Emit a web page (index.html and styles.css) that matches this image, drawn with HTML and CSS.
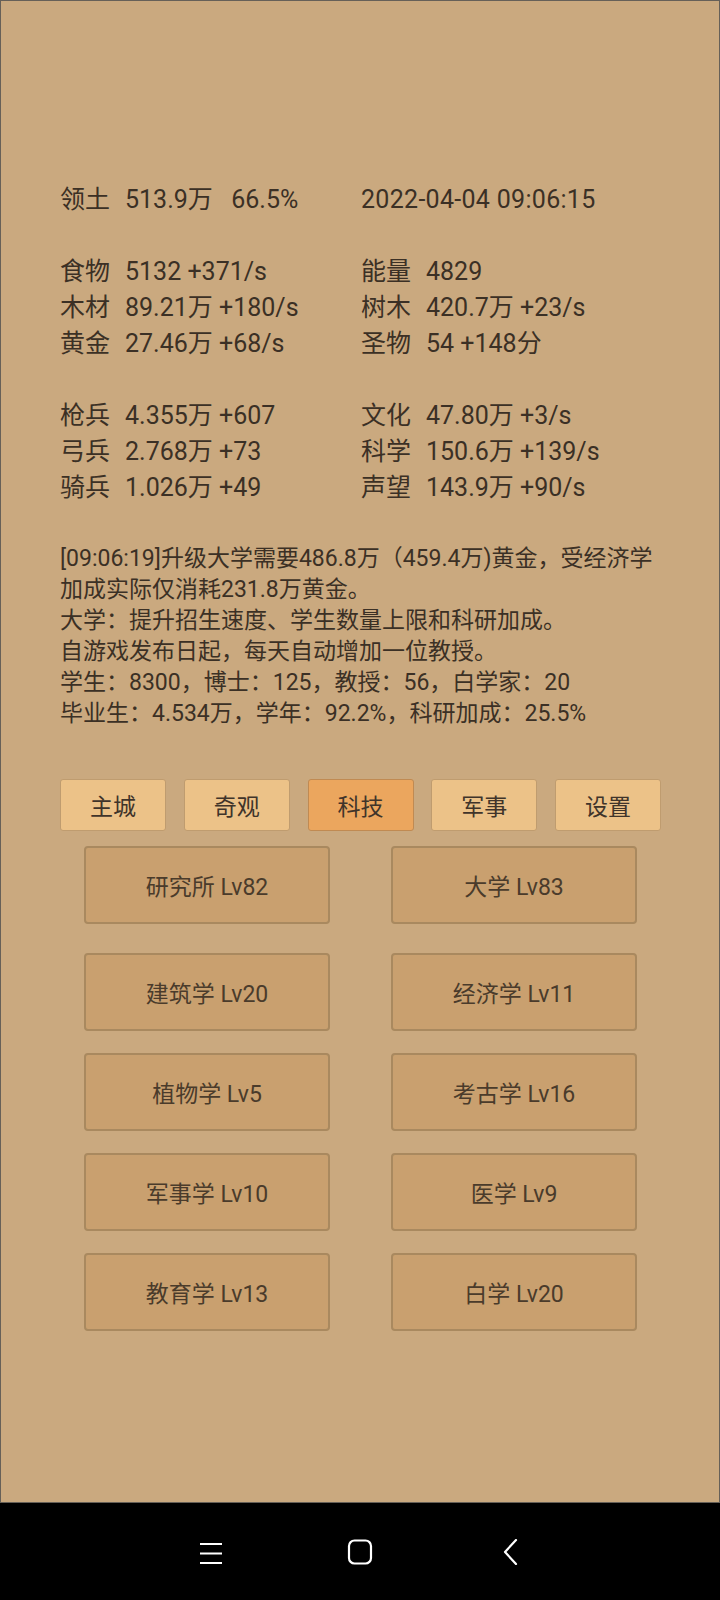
FILE: index.html
```html
<!DOCTYPE html>
<html lang="zh-CN">
<head>
<meta charset="utf-8">
<title>科技</title>
<link rel="stylesheet" href="styles.css">
</head>
<body>
<div class="frame">
  <div class="stats">
    <div class="row">
      <div class="cell"><span class="lbl">领土</span><span class="val">513.9万  <span class="pct">66.5%</span></span></div>
      <div class="cell"><span class="val date">2022-04-04 09:06:15</span></div>
    </div>
    <div class="row blank"></div>
    <div class="row">
      <div class="cell"><span class="lbl">食物</span><span class="val">5132 +371/s</span></div>
      <div class="cell"><span class="lbl">能量</span><span class="val">4829</span></div>
    </div>
    <div class="row">
      <div class="cell"><span class="lbl">木材</span><span class="val">89.21万 +180/s</span></div>
      <div class="cell"><span class="lbl">树木</span><span class="val">420.7万 +23/s</span></div>
    </div>
    <div class="row">
      <div class="cell"><span class="lbl">黄金</span><span class="val">27.46万 +68/s</span></div>
      <div class="cell"><span class="lbl">圣物</span><span class="val">54 +148分</span></div>
    </div>
    <div class="row blank"></div>
    <div class="row">
      <div class="cell"><span class="lbl">枪兵</span><span class="val">4.355万 +607</span></div>
      <div class="cell"><span class="lbl">文化</span><span class="val">47.80万 +3/s</span></div>
    </div>
    <div class="row">
      <div class="cell"><span class="lbl">弓兵</span><span class="val">2.768万 +73</span></div>
      <div class="cell"><span class="lbl">科学</span><span class="val">150.6万 +139/s</span></div>
    </div>
    <div class="row">
      <div class="cell"><span class="lbl">骑兵</span><span class="val">1.026万 +49</span></div>
      <div class="cell"><span class="lbl">声望</span><span class="val">143.9万 +90/s</span></div>
    </div>
  </div>

  <div class="message">
    <p>[09:06:19]升级大学需要486.8万（459.4万)黄金，受经济学加成实际仅消耗231.8万黄金。</p>
    <p>大学：提升招生速度、学生数量上限和科研加成。</p>
    <p>自游戏发布日起，每天自动增加一位教授。</p>
    <p>学生：8300，博士：125，教授：56，白学家：20</p>
    <p>毕业生：4.534万，学年：92.2%，科研加成：25.5%</p>
  </div>

  <div class="tabs">
    <div class="tab">主城</div>
    <div class="tab">奇观</div>
    <div class="tab active">科技</div>
    <div class="tab">军事</div>
    <div class="tab">设置</div>
  </div>

  <div class="grid">
    <div class="btn">研究所 Lv82</div>
    <div class="btn">大学 Lv83</div>
    <div class="btn">建筑学 Lv20</div>
    <div class="btn">经济学 Lv11</div>
    <div class="btn">植物学 Lv5</div>
    <div class="btn">考古学 Lv16</div>
    <div class="btn">军事学 Lv10</div>
    <div class="btn">医学 Lv9</div>
    <div class="btn">教育学 Lv13</div>
    <div class="btn">白学 Lv20</div>
  </div>
</div>

<div class="navbar">
  <svg class="nav-icon menu" width="24" height="24" viewBox="0 0 24 24">
    <path d="M1 3h22M1 12.5h22M1 22h22" stroke="#fff" stroke-width="2.2" fill="none"/>
  </svg>
  <svg class="nav-icon home" width="26" height="26" viewBox="0 0 26 26">
    <rect x="2" y="1.5" width="22" height="23" rx="5.5" ry="5.5" stroke="#fff" stroke-width="2.2" fill="none"/>
  </svg>
  <svg class="nav-icon back" width="16" height="26" viewBox="0 0 16 26">
    <path d="M13 1L2 13l11 12" stroke="#fff" stroke-width="2.2" fill="none" stroke-linecap="round" stroke-linejoin="round"/>
  </svg>
</div>
</body>
</html>
```

FILE: styles.css
```css
* { box-sizing: border-box; }
html, body { margin: 0; padding: 0; }
body {
  width: 720px;
  height: 1600px;
  background: #000;
  font-family: Roboto, "Noto Sans CJK SC", sans-serif;
  color: #3b3025;
  overflow: hidden;
}
.frame {
  height: 1503px;
  background: #caa97f;
  border: 1px solid #666058;
  padding-top: 181px;
}
.stats {
  margin-left: 59px;
  font-size: 25px;
  line-height: 36px;
}
.row {
  display: grid;
  grid-template-columns: 301px 1fr;
  height: 36px;
}
.cell { display: flex; white-space: pre; }
.lbl { width: 65px; flex: none; }
.val { white-space: pre; }
.pct { margin-left: 6px; }
.date { letter-spacing: 0.3px; }

.message {
  margin: 37px 0 0 59px;
  width: 600px;
  font-size: 23px;
  line-height: 31px;
}
.message p { margin: 0; }

.tabs {
  margin: 50px 0 0 59px;
  width: 601px;
  display: flex;
  justify-content: space-between;
}
.tab {
  width: 106px;
  height: 52px;
  background: #ecc288;
  border: 1.5px solid #bf9c6f;
  border-radius: 3px;
  display: flex;
  align-items: center;
  justify-content: center;
  font-size: 23px;
  color: #40342a;
}
.tab.active { background: #eba65e; border-color: #c08a52; }

.grid {
  margin: 15px 0 0 83px;
  width: 553px;
  display: grid;
  grid-template-columns: 246px 246px;
  column-gap: 61px;
  row-gap: 22px;
}
.btn {
  height: 78px;
  background: #c9a06f;
  border: 2px solid #a9895f;
  border-radius: 4px;
  display: flex;
  align-items: center;
  justify-content: center;
  font-size: 23px;
  color: #4a3b2b;
}
.btn:nth-child(-n+2) { margin-bottom: 7px; }

.navbar {
  height: 97px;
  background: #000;
  position: relative;
}
.nav-icon { position: absolute; }
.menu { left: 199px; top: 38px; }
.home { left: 347px; top: 36px; }
.back { left: 503px; top: 36px; }
```
